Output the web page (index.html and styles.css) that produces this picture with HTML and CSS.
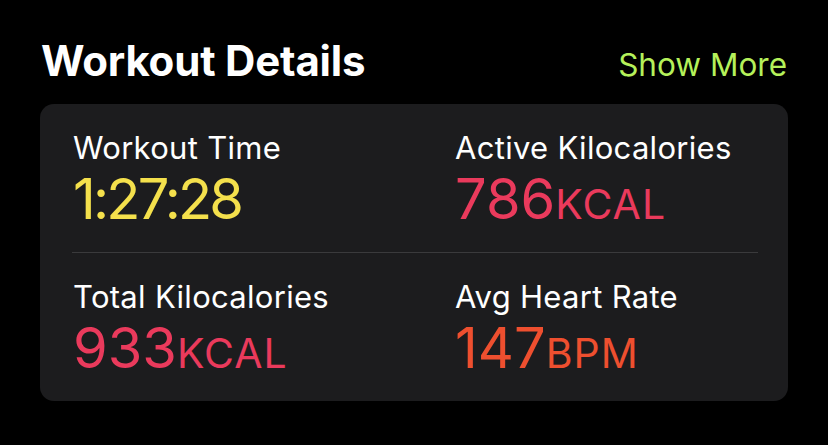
FILE: index.html
```html
<!DOCTYPE html>
<html>
<head>
  <title>Workout Details</title>
  <link rel="stylesheet" href="styles.css">
</head>
<body>
  <div class="section-head">
    <h1>Workout Details</h1>
    <a class="more" href="#">Show More</a>
  </div>

  <div class="card">
    <div class="row">
      <div class="stat">
        <div class="label">Workout Time</div>
        <div class="value time">1:27:28</div>
      </div>
      <div class="stat">
        <div class="label">Active Kilocalories</div>
        <div class="value kcal">786<span class="unit">KCAL</span></div>
      </div>
    </div>
    <div class="divider"></div>
    <div class="row">
      <div class="stat">
        <div class="label">Total Kilocalories</div>
        <div class="value kcal">933<span class="unit">KCAL</span></div>
      </div>
      <div class="stat">
        <div class="label">Avg Heart Rate</div>
        <div class="value bpm">147<span class="unit">BPM</span></div>
      </div>
    </div>
  </div>
</body>
</html>
```

FILE: styles.css
```css
body {
  margin: 0;
  background-color: #000;
  color: #fff;
  font-family: Inter, "Noto Sans", sans-serif;
}

.section-head {
  display: flex;
  justify-content: space-between;
  align-items: baseline;
  padding: 37px 41px 0 41px;
  height: 104px;
  box-sizing: border-box;
}

h1 {
  margin: 0;
  font-size: 42px;
  font-weight: 700;
  letter-spacing: -0.2px;
  line-height: 48px;
}

.more {
  color: #b5f15a;
  text-decoration: none;
  font-size: 31.5px;
  line-height: 48px;
}

.card {
  margin: 0 40px;
  background-color: #1c1c1e;
  border-radius: 14px;
  padding: 0 30px 0 33px;
  height: 297px;
  box-sizing: border-box;
}

.row {
  display: grid;
  grid-template-columns: 382px 1fr;
  height: 148px;
  padding-top: 26px;
  box-sizing: border-box;
}

.divider {
  height: 1px;
  background-color: #3a3a3c;
  margin-left: -1px;
}

.label {
  font-size: 31px;
  letter-spacing: 0.3px;
  line-height: 36px;
}

.value {
  font-size: 56px;
  line-height: 66px;
}

.unit {
  font-size: 41px;
  letter-spacing: 1px;
}

.time {
  color: #f4e04c;
  letter-spacing: -2.8px;
}

.kcal {
  color: #ea3a5c;
}

.bpm {
  color: #ee4f2f;
}
```
